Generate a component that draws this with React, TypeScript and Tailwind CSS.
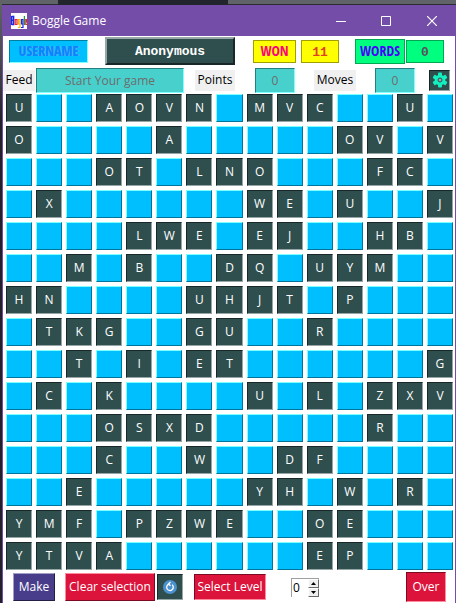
import React from "react";

const rows = [
  "U..AOVN.MVC..U.",
  "O....A.....OV.V",
  "...OT.LNO...FC.",
  ".X......WE.U..J",
  "....LWE.EJ..HB.",
  "..M.B..DQ.UYM..",
  "HN....UHJT.P...",
  ".TKG..GU..R....",
  "..T.I.ET......G",
  ".C.K....U.L.ZXV",
  "...OSXD.....R..",
  "...C..W..DF....",
  "..E.....YH.W.R.",
  "YMF.PZWE..OE...",
  "YTVA......EP...",
];

const slateSunken =
  "border border-t-[#182727] border-l-[#182727] border-r-[#97a7a7] border-b-[#97a7a7] bg-[#2f4f4f]";

const bannerText =
  "font-['Liberation_Sans_Narrow','Open_Sans_Condensed','Roboto_Condensed',Roboto,sans-serif] text-[14px] font-bold leading-4";

function TitleBar() {
  return (
    <header className="flex h-[31px] items-center bg-[#744da9] pl-2 text-white">
      <svg className="h-4 w-4" viewBox="0 0 16 16" aria-hidden="true">
        <rect width="16" height="16" fill="#fff" />
        <g fill="none" strokeWidth="1.2">
          <path d="M.6 3v9M.6 3.600H2.600v3.600H.6M2.600 7.200v4.200H.6" stroke="#1428f0" strokeWidth="1.500" />
          <path d="M4.200 6.500H6v5H4.200z" stroke="#f02020" />
          <path d="M9 6.500H7.500V11H9V6v8.500H7" stroke="#f5b400" />
          <path d="M12 6.500h-1.500V11H12V6v8.500h-2" stroke="#1428f0" />
          <path d="M13.400 3v9" stroke="#18a038" />
          <path d="M15 9h1V6.500h-1.200v5H16" stroke="#f02020" />
        </g>
      </svg>
      <h1 className="ml-[5px] flex-1 text-[12px] leading-4">Boggle Game</h1>
      <button aria-label="Minimize" className="flex h-full w-[45px] items-center justify-center">
        <svg className="h-[10px] w-[10px]" viewBox="0 0 10 10"><path d="M0 5.500h10" stroke="#fff" /></svg>
      </button>
      <button aria-label="Maximize" className="flex h-full w-[45px] items-center justify-center">
        <svg className="h-[10px] w-[10px]" viewBox="0 0 10 10"><path d="M.5.5h9v9h-9z" fill="none" stroke="#fff" /></svg>
      </button>
      <button aria-label="Close" className="flex h-full w-[47px] items-center justify-center">
        <svg className="h-[10px] w-[10px]" viewBox="0 0 10 10"><path d="M0 0l10 10M10 0L0 10" stroke="#fff" strokeWidth="1.200" /></svg>
      </button>
    </header>
  );
}

function Score({ label, value, className }: { label: string; value: string; className: string }) {
  return (
    <output
      aria-label={label}
      className={
        "flex h-[23px] w-[38px] items-center justify-center border pt-[3px] font-['Liberation_Mono',monospace] text-[13px] font-bold leading-4 " +
        className
      }
    >
      {value}
    </output>
  );
}

function ScoreRow() {
  return (
    <section className="flex h-[30px] items-center pl-[6px] pr-[11px]">
      <div className={"flex h-[23px] w-[79px] items-center justify-center border border-t-[#007f9f] border-l-[#007f9f] border-r-[#7fffff] border-b-[#7fffff] bg-[#00bfff] text-[#0a84ff] text-shadow-[1px_0_0_#5aa9f5] " + bannerText}>
        USERNAME
      </div>
      <button className="ml-[17px] h-7 flex-1 border-2 border-t-[#97a7a7] border-l-[#97a7a7] border-r-[#182727] border-b-[#182727] bg-[#2f4f4f] pt-[2px] font-['Liberation_Mono',monospace] text-[13px] font-bold leading-4 text-white">
        Anonymous
      </button>
      <div className={"ml-[18px] flex h-[23px] w-[43px] items-center justify-center border border-[#a0a000] bg-[#ffff00] text-[#ff0080] " + bannerText}>
        WON
      </div>
      <div className="ml-[5px]"><Score label="Games won" value="11" className="border-[#a0a000] bg-[#ffff00] text-[#e04028]" /></div>
      <div className={"ml-4 flex h-[25px] w-[50px] items-center justify-center border border-[#00a854] bg-[#00ff7f] text-[#4b00ff] " + bannerText}>
        WORDS
      </div>
      <div className="ml-px"><Score label="Words found" value="0" className="border-[#00a854] bg-[#00ff7f] text-[#5f4f60]" /></div>
    </section>
  );
}

function FeedRow() {
  const label = "h-[21px] bg-[#f0f0f0] text-center text-[12px] leading-5 text-black";
  const field =
    "h-[25px] border border-t-[#248080] border-l-[#248080] border-r-[#7fffff] border-b-[#7fffff] bg-[#48d1cc] text-center text-[12px] text-[#6d6d6d]";
  return (
    <section className="flex h-7 items-center pr-[5px]">
      <label htmlFor="feed" className={label + " w-8"}>Feed</label>
      <input id="feed" readOnly value="Start Your game" className={field + " ml-px min-w-0 flex-1"} />
      <label htmlFor="points" className={label + " ml-[11px] w-10"}>Points</label>
      <input id="points" readOnly value="0" className={field + " ml-5 w-10"} />
      <label htmlFor="moves" className={label + " ml-[19px] w-[42px]"}>Moves</label>
      <input id="moves" readOnly value="0" className={field + " ml-[19px] w-10"} />
      <button aria-label="Settings" className={"ml-[14px] flex h-[21px] w-[21px] items-center justify-center " + slateSunken}>
        <svg className="h-4 w-4" viewBox="0 0 16 16">
          <g fill="#12f0c0">
            <circle cx="8" cy="8" r="5.300" />
            <rect x="6" y="0.500" width="4" height="15" rx="1" />
            <rect x="6" y="0.500" width="4" height="15" rx="1" transform="rotate(60 8 8)" />
            <rect x="6" y="0.500" width="4" height="15" rx="1" transform="rotate(120 8 8)" />
          </g>
          <circle cx="8" cy="8" r="2" fill="#9aa" stroke="#2f4f4f" />
        </svg>
      </button>
    </section>
  );
}

function Board() {
  return (
    <main className="grid grid-cols-15 gap-1 pl-[3px] pr-[2px]">
      {rows.flatMap((row, y) =>
        row.split("").map((letter, x) => (
          <button
            key={y + "-" + x}
            aria-label={letter === "." ? "Empty cell" : undefined}
            className={
              letter === "."
                ? "h-7 border border-t-[#7fffff] border-l-[#7fffff] border-r-[#00749b] border-b-[#00749b] bg-[#00bfff]"
                : "h-7 text-[12px] leading-4 text-white " + slateSunken
            }
          >
            {letter === "." ? null : letter}
          </button>
        )),
      )}
    </main>
  );
}

function Controls() {
  const red = "border border-t-[#7a0a22] border-l-[#7a0a22] border-r-[#ff8a9e] border-b-[#ff8a9e] bg-[#dc143c]";
  return (
    <footer className="flex h-[33px] items-center pt-px pl-[10px] pr-[9px] text-[12px] leading-4 text-white">
      <button className="h-7 w-[42px] border border-t-[#a49ec5] border-l-[#a49ec5] border-r-[#241e45] border-b-[#241e45] bg-[#483d8b]">Make</button>
      <button className="ml-[10px] h-7 w-[90px] whitespace-nowrap border border-t-[#ff8a9e] border-l-[#ff8a9e] border-r-[#7a0a22] border-b-[#7a0a22] bg-[#dc143c]">Clear selection</button>
      <button aria-label="Refresh" className={"ml-[2px] flex h-[26px] w-[26px] items-center justify-center " + slateSunken}>
        <svg className="h-[14px] w-[14px]" viewBox="0 0 14 14">
          <circle cx="7" cy="7" r="7" fill="#4b91cf" />
          <path d="M9.200 4.800a3.300 3.300 0 1 1-3.200-.7M7.500 2L5.500 4l2 1.800" fill="none" stroke="#fff" strokeWidth="1.300" />
        </svg>
      </button>
      <button className={"ml-[11px] h-[26px] w-[72px] whitespace-nowrap " + red}>Select Level</button>
      <div className="ml-[25px] flex h-[19px] w-7 border-t border-l border-[#a0a0a0] bg-white">
        <input aria-label="Level" defaultValue="0" className="w-4 min-w-0 pl-px text-black" />
        <div className="flex w-[11px] flex-col">
          <button aria-label="Increase level" className="flex h-[9px] items-center justify-center border border-t-white border-l-white border-r-[#696969] border-b-[#696969] bg-[#f0f0f0]">
            <svg className="h-[3px] w-[5px]" viewBox="0 0 5 3"><path d="M0 3L2.500 0 5 3z" /></svg>
          </button>
          <button aria-label="Decrease level" className="flex h-[9px] items-center justify-center border border-t-white border-l-white border-r-[#696969] border-b-[#696969] bg-[#f0f0f0]">
            <svg className="h-[3px] w-[5px]" viewBox="0 0 5 3"><path d="M0 0L2.500 3 5 0z" /></svg>
          </button>
        </div>
      </div>
      <button className={"ml-auto h-[30px] w-10 " + red}>Over</button>
    </footer>
  );
}

export default function App() {
  return (
    <div className="min-h-screen bg-linear-to-b from-[#606468] from-0% via-[#4a4850] via-10% to-[#22212b] to-20% pl-[2px] font-['Open_Sans','Noto_Sans',sans-serif]">
      <div className="flex h-[5px]">
        <div className="w-14 border-b border-[#2a2c30] bg-[#606468]" />
        <div className="w-[170px] bg-[#23252d]" />
        <div className="flex-1 border-b border-[#2a2c30] bg-[#606468]" />
      </div>
      <div className="border-r border-b border-l border-[#744da9] bg-white">
        <TitleBar />
        <ScoreRow />
        <FeedRow />
        <Board />
        <Controls />
      </div>
    </div>
  );
}
